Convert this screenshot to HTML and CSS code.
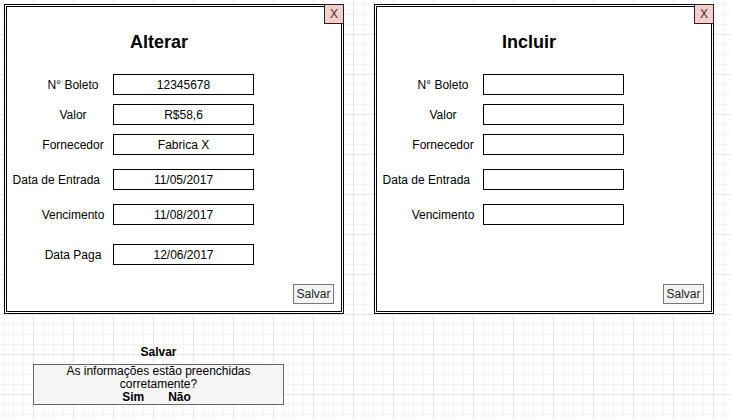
FILE: index.html
```html
<!DOCTYPE html>
<html lang="pt">
<head>
    <meta charset="UTF-8">
    <meta name="viewport" content="width=device-width, initial-scale=1.0">
    <title>Boletos - Alterar / Incluir</title>
    <link rel="stylesheet" href="styles.css">
</head>
<body>
    <div class="canvas">
        <div class="panels">
            <!-- Alterar -->
            <section class="panel">
                <span class="close">X</span>
                <h1 class="panel-title">Alterar</h1>
                <div class="form">
                    <div class="row"><span class="label">N° Boleto</span><span class="field">12345678</span></div>
                    <div class="row"><span class="label">Valor</span><span class="field">R$58,6</span></div>
                    <div class="row"><span class="label">Fornecedor</span><span class="field">Fabrica X</span></div>
                    <div class="row gap-md"><span class="label long">Data de Entrada</span><span class="field">11/05/2017</span></div>
                    <div class="row gap-md"><span class="label">Vencimento</span><span class="field">11/08/2017</span></div>
                    <div class="row gap-lg"><span class="label">Data Paga</span><span class="field">12/06/2017</span></div>
                </div>
                <button class="save">Salvar</button>
            </section>

            <!-- Incluir -->
            <section class="panel">
                <span class="close">X</span>
                <h1 class="panel-title">Incluir</h1>
                <div class="form">
                    <div class="row"><span class="label">N° Boleto</span><span class="field"></span></div>
                    <div class="row"><span class="label">Valor</span><span class="field"></span></div>
                    <div class="row"><span class="label">Fornecedor</span><span class="field"></span></div>
                    <div class="row gap-md"><span class="label long">Data de Entrada</span><span class="field"></span></div>
                    <div class="row gap-md"><span class="label">Vencimento</span><span class="field"></span></div>
                </div>
                <button class="save">Salvar</button>
            </section>
        </div>

        <!-- Confirmação -->
        <div class="confirm">
            <div class="confirm-title">Salvar</div>
            <div class="confirm-box">
                As informações estão preenchidas corretamente?
                <div class="confirm-actions">
                    <span>Sim</span>
                    <span>Não</span>
                </div>
            </div>
        </div>
    </div>
</body>
</html>
```

FILE: styles.css
```css
body {
    margin: 0;
    font-family: "Liberation Sans", Arial, sans-serif;
    font-size: 12px;
    color: #000;
    background-color: #fff;
    background-image:
        linear-gradient(#e6e6e6 1px, transparent 1px),
        linear-gradient(90deg, #e6e6e6 1px, transparent 1px),
        linear-gradient(#f4f4f4 1px, transparent 1px),
        linear-gradient(90deg, #f4f4f4 1px, transparent 1px);
    background-size: 40px 40px, 40px 40px, 10px 10px, 10px 10px;
    background-position: 0 34px, 33px 0, 0 4px, 3px 0;
    min-height: 100vh;
}
.canvas {
    padding: 4px 0 0 4px;
}
.panels {
    display: flex;
    gap: 30px;
}
.panel {
    position: relative;
    width: 340px;
    height: 310px;
    box-sizing: border-box;
    border: 3px double #000;
    background: #fff;
    display: flex;
    flex-direction: column;
}
.close {
    position: absolute;
    top: -3px;
    right: -3px;
    width: 20px;
    height: 20px;
    box-sizing: border-box;
    border: 1px solid #222;
    background: #f8cecc;
    color: #333;
    display: flex;
    align-items: center;
    justify-content: center;
    font-size: 12px;
}
.panel-title {
    margin: 25px 30px 0 0;
    font-size: 18px;
    line-height: 20px;
    font-weight: bold;
    text-align: center;
}
.form {
    margin-top: 22px;
    display: flex;
    flex-direction: column;
    gap: 9px;
}
.row {
    display: flex;
    align-items: center;
}
.row.gap-md {
    margin-top: 5px;
}
.row.gap-lg {
    margin-top: 10px;
}
.label {
    width: 70px;
    margin-left: 31px;
    margin-right: 5px;
    display: flex;
    justify-content: center;
    white-space: nowrap;
}
.label.long {
    justify-content: flex-end;
    padding-right: 8px;
    box-sizing: border-box;
}
.field {
    width: 141px;
    height: 21px;
    box-sizing: border-box;
    border: 1px solid #000;
    background: #fff;
    display: flex;
    align-items: center;
    justify-content: center;
}
.save {
    margin: auto 7px 7px 0;
    align-self: flex-end;
    width: 41px;
    height: 20px;
    padding: 0;
    box-sizing: border-box;
    border: 1px solid #777;
    background: #f3f3f3;
    color: #222;
    font-family: inherit;
    font-size: 12px;
}
.confirm {
    width: 251px;
    margin: 31px 0 0 29px;
}
.confirm-title {
    font-weight: bold;
    line-height: 14px;
    text-align: center;
    margin-bottom: 5px;
}
.confirm-box {
    border: 1px solid #666;
    background: #f5f5f5;
    line-height: 13px;
    text-align: center;
}
.confirm-actions {
    display: flex;
    justify-content: center;
    gap: 24px;
    padding-right: 4px;
    font-weight: bold;
}
```
